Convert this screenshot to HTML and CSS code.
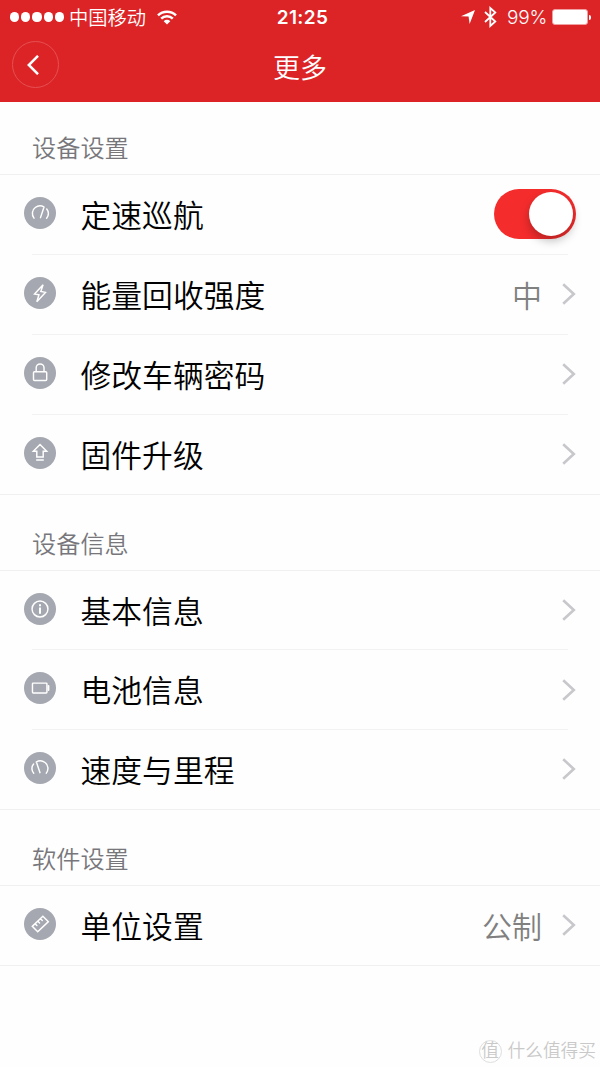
FILE: index.html
```html
<!DOCTYPE html>
<html lang="zh-CN">
<head>
<meta charset="UTF-8" />
<meta name="viewport" content="width=device-width, initial-scale=1" />
<title>更多</title>
<link rel="stylesheet" href="styles.css">
</head>
<body>
<header class="header">
  <div class="status-bar">
    <div class="status-left">
      <div class="signal"><i></i><i></i><i></i><i></i><i></i></div>
      <span class="carrier">中国移动</span>
      <svg class="wifi" width="20" height="15" viewBox="0 0 20 15" fill="none" stroke="#fff" stroke-width="2.5">
        <path d="M1 5.3A13 13 0 0 1 19 5.3"/>
        <path d="M4.2 8.7A8.3 8.3 0 0 1 15.8 8.7"/>
        <path d="M10 14.5L6.7 11.2A4.7 4.7 0 0 1 13.3 11.2Z" fill="#fff" stroke="none"/>
      </svg>
    </div>
    <span class="clock">21:25</span>
    <div class="status-right">
      <svg width="14" height="14" viewBox="0 0 14 14" fill="#fff"><path d="M14 0L8.6 14L7.6 6.6L0 6.2Z"/></svg>
      <svg class="bluetooth" width="13" height="22" viewBox="0 0 13 22" fill="none" stroke="#fff" stroke-width="1.8"><path d="M1 6L11.3 15.5L6.3 20V2L11.3 6.5L1 16"/></svg>
      <span class="percent">99%</span>
      <div class="battery"></div>
    </div>
  </div>
  <nav class="nav-bar">
    <button class="back-button" type="button" aria-label="返回">
      <svg width="12" height="20" viewBox="0 0 12 20" fill="none" stroke="#fff" stroke-width="2.5"><path d="M11 .8L1.8 10L11 19.2"/></svg>
    </button>
    <h1>更多</h1>
  </nav>
</header>

<main>
  <section>
    <h2>设备设置</h2>
    <ul class="list">
      <li class="row">
        <span class="icon"><svg viewBox="0 0 31 31"><path d="M9.7 20.5C7.2 17.2 7.7 12.5 10.9 10.2C13.4 8.3 17 8.2 19.5 9.7M16 20L19 10.9M22 11.7C24.2 14.2 24.2 18 21.9 20.5"/></svg></span>
        <span class="label">定速巡航</span>
        <span class="switch" role="switch" aria-checked="true"></span>
      </li>
      <li class="row">
        <span class="icon"><svg viewBox="0 0 31 31"><path d="M18.5 7.5L10.2 16.5L14.5 17.2L12.4 24L20.8 14.9L16.3 14.1Z"/></svg></span>
        <span class="label">能量回收强度</span>
        <span class="value">中</span>
        <svg class="arrow" viewBox="0 0 14 22"><path d="M1.2 1.2L11.8 11L1.2 20.8"/></svg>
      </li>
      <li class="row">
        <span class="icon"><svg viewBox="0 0 31 31"><rect x="9.2" y="14.2" width="12.8" height="8.6" rx="1"/><path d="M11.8 14V10.5A3.8 3.8 0 0 1 19.4 10.5V14"/></svg></span>
        <span class="label">修改车辆密码</span>
        <svg class="arrow" viewBox="0 0 14 22"><path d="M1.2 1.2L11.8 11L1.2 20.8"/></svg>
      </li>
      <li class="row">
        <span class="icon"><svg viewBox="0 0 31 31"><path d="M15.5 7.2L22 13.8H18.6V19.3H12.4V13.8H9ZM12.3 22.3H18.7"/></svg></span>
        <span class="label">固件升级</span>
        <svg class="arrow" viewBox="0 0 14 22"><path d="M1.2 1.2L11.8 11L1.2 20.8"/></svg>
      </li>
    </ul>
  </section>

  <section>
    <h2>设备信息</h2>
    <ul class="list">
      <li class="row">
        <span class="icon"><svg viewBox="0 0 31 31"><circle cx="15.5" cy="15.5" r="7.7"/><path d="M15.5 14V20M15.5 11V12.8" stroke-width="2" stroke-linecap="butt"/></svg></span>
        <span class="label">基本信息</span>
        <svg class="arrow" viewBox="0 0 14 22"><path d="M1.2 1.2L11.8 11L1.2 20.8"/></svg>
      </li>
      <li class="row">
        <span class="icon"><svg viewBox="0 0 31 31"><rect x="8.2" y="10.8" width="14" height="9.6" rx=".7"/><path d="M23.7 13.5V17.5" stroke-width="1.8"/></svg></span>
        <span class="label">电池信息</span>
        <svg class="arrow" viewBox="0 0 14 22"><path d="M1.2 1.2L11.8 11L1.2 20.8"/></svg>
      </li>
      <li class="row">
        <span class="icon"><svg viewBox="0 0 31 31"><path d="M21.6 20.5C24.1 17.2 23.6 12.5 20.4 10.2C17.9 8.3 14.3 8.2 11.8 9.7M15.5 20L12.4 10.9M9.3 11.7C7.1 14.2 7.1 18 9.4 20.5"/></svg></span>
        <span class="label">速度与里程</span>
        <svg class="arrow" viewBox="0 0 14 22"><path d="M1.2 1.2L11.8 11L1.2 20.8"/></svg>
      </li>
    </ul>
  </section>

  <section>
    <h2>软件设置</h2>
    <ul class="list">
      <li class="row">
        <span class="icon"><svg viewBox="0 0 31 31"><path d="M8 17.8L18.3 8L23.6 13.2L13.3 23.1ZM10.8 15.3L12.5 17M13.4 12.8L15.1 14.5M16 10.3L17.7 12"/></svg></span>
        <span class="label">单位设置</span>
        <span class="value">公制</span>
        <svg class="arrow" viewBox="0 0 14 22"><path d="M1.2 1.2L11.8 11L1.2 20.8"/></svg>
      </li>
    </ul>
  </section>
</main>

<footer class="watermark">
  <span class="badge">值</span>
  <span>什么值得买</span>
</footer>
</body>
</html>
```
FILE: styles.css
```css
/* Reset and base */
* {
  box-sizing: border-box;
}
body {
  margin: 0;
  height: 1067px;
  display: flex;
  flex-direction: column;
  overflow: hidden;
  background: #fefefe;
  color: #000;
  font-family: 'Inter', 'Noto Sans CJK SC', sans-serif;
}
h1, h2, ul {
  margin: 0;
  padding: 0;
  font-weight: 350;
}
svg {
  display: block;
  flex-shrink: 0;
}

/* Header */
.header {
  height: 102px;
  background: #dc2427;
  color: #fff;
}
.status-bar {
  display: grid;
  grid-template-columns: 1fr auto 1fr;
  align-items: center;
  height: 32px;
  padding: 0 9px 0 10px;
  font-size: 19px;
  line-height: 32px;
}
.status-left, .status-right {
  display: flex;
  align-items: center;
}
.status-right {
  justify-content: flex-end;
}
.signal {
  display: flex;
  gap: 2px;
  margin-right: 5px;
}
.signal i {
  width: 9.2px;
  height: 9.2px;
  border-radius: 50%;
  background: #fff;
}
.carrier {
  padding-top: 1px;
  font-weight: 350;
  font-size: 19.3px;
}
.wifi {
  margin-left: 11px;
}
.clock {
  padding: 2px 0 0 4px;
  font-size: 19px;
  font-weight: 600;
  letter-spacing: .4px;
}
.bluetooth {
  margin: 0 10px 0 9px;
}
.percent {
  padding-top: 2px;
  font-weight: 300;
  letter-spacing: -.2px;
}
.battery {
  position: relative;
  width: 36px;
  height: 16px;
  margin: 0 3px 0 5px;
  border: 1px solid #f0a0a1;
  border-radius: 3px;
  background: #fff;
}
.battery::after {
  content: '';
  position: absolute;
  right: -4px;
  top: 5px;
  width: 2px;
  height: 5px;
  border-radius: 0 2px 2px 0;
  background: #fff;
}
.nav-bar {
  display: grid;
  grid-template-columns: 47px 1fr 47px;
  align-items: center;
  height: 66px;
  padding: 0 12px;
}
.nav-bar h1 {
  padding-top: 8px;
  text-align: center;
  font-size: 27px;
  line-height: 40px;
}
.back-button {
  display: flex;
  align-items: center;
  justify-content: center;
  width: 47px;
  height: 47px;
  margin-top: -1px;
  padding: 0 5px 0 0;
  border: 1px solid #e65052;
  border-radius: 50%;
  background: none;
}

/* Lists */
h2 {
  height: 76px;
  padding: 33px 32px 0;
  color: #77777b;
  font-size: 24.2px;
  line-height: 36px;
}
section:first-child h2 {
  height: 72px;
  padding-top: 29px;
}
.list {
  list-style: none;
  border-top: 1px solid #f0f0f1;
  border-bottom: 1px solid #f0f0f1;
  margin-bottom: -1px;
}
.row {
  position: relative;
  display: flex;
  align-items: center;
  height: 80px;
  padding: 0 24px 2px;
}
.row:last-child {
  height: 79px;
  padding-bottom: 1px;
}
section:nth-child(2) .row:first-child {
  height: 79px;
  padding-bottom: 1px;
}
section:nth-child(2) .row:not(:first-child) {
  padding-bottom: 1px;
}
/* inset separator */
.row:not(:last-child)::after {
  content: '';
  position: absolute;
  left: 32px;
  right: 32px;
  bottom: 0;
  height: 1px;
  background: #f2f2f3;
}
.icon {
  width: 32px;
  height: 32px;
  margin: 0 24.5px 3px 0;
}
.icon svg {
  width: 32px;
  height: 32px;
  border-radius: 50%;
  background: #a5a8b0;
  fill: none;
  stroke: #fff;
  stroke-width: 1.4;
  stroke-linecap: round;
}
.label {
  flex: 1;
  padding-top: 3px;
  font-size: 30.8px;
  line-height: 46px;
  font-weight: 350;
}
.value {
  margin-right: 20px;
  padding-top: 3px;
  color: #808080;
  font-size: 30px;
  line-height: 46px;
  font-weight: 350;
}
.arrow {
  width: 14px;
  height: 22px;
  fill: none;
  stroke: #c7c7cc;
  stroke-width: 2.6;
}
.switch {
  width: 82px;
  height: 50px;
  padding: 3px;
  border-radius: 25px;
  background: #f42c2c;
}
.switch::after {
  content: '';
  display: block;
  width: 44px;
  height: 44px;
  margin-left: 35px;
  border-radius: 50%;
  background: #fff;
  box-shadow: 0 5px 10px rgba(0, 0, 0, .25);
}
.switch::after {
  margin-left: 32px;
}

/* Watermark */
.watermark {
  display: flex;
  align-items: center;
  justify-content: flex-end;
  gap: 6px;
  margin-top: auto;
  padding: 0 4px 4px 0;
  color: #c9c9c9;
  font-size: 17.7px;
  line-height: 24px;
  font-weight: 350;
}
.badge {
  width: 23px;
  height: 23px;
  border: 1px solid #dedede;
  border-radius: 50%;
  text-align: center;
  line-height: 20px;
}
```
